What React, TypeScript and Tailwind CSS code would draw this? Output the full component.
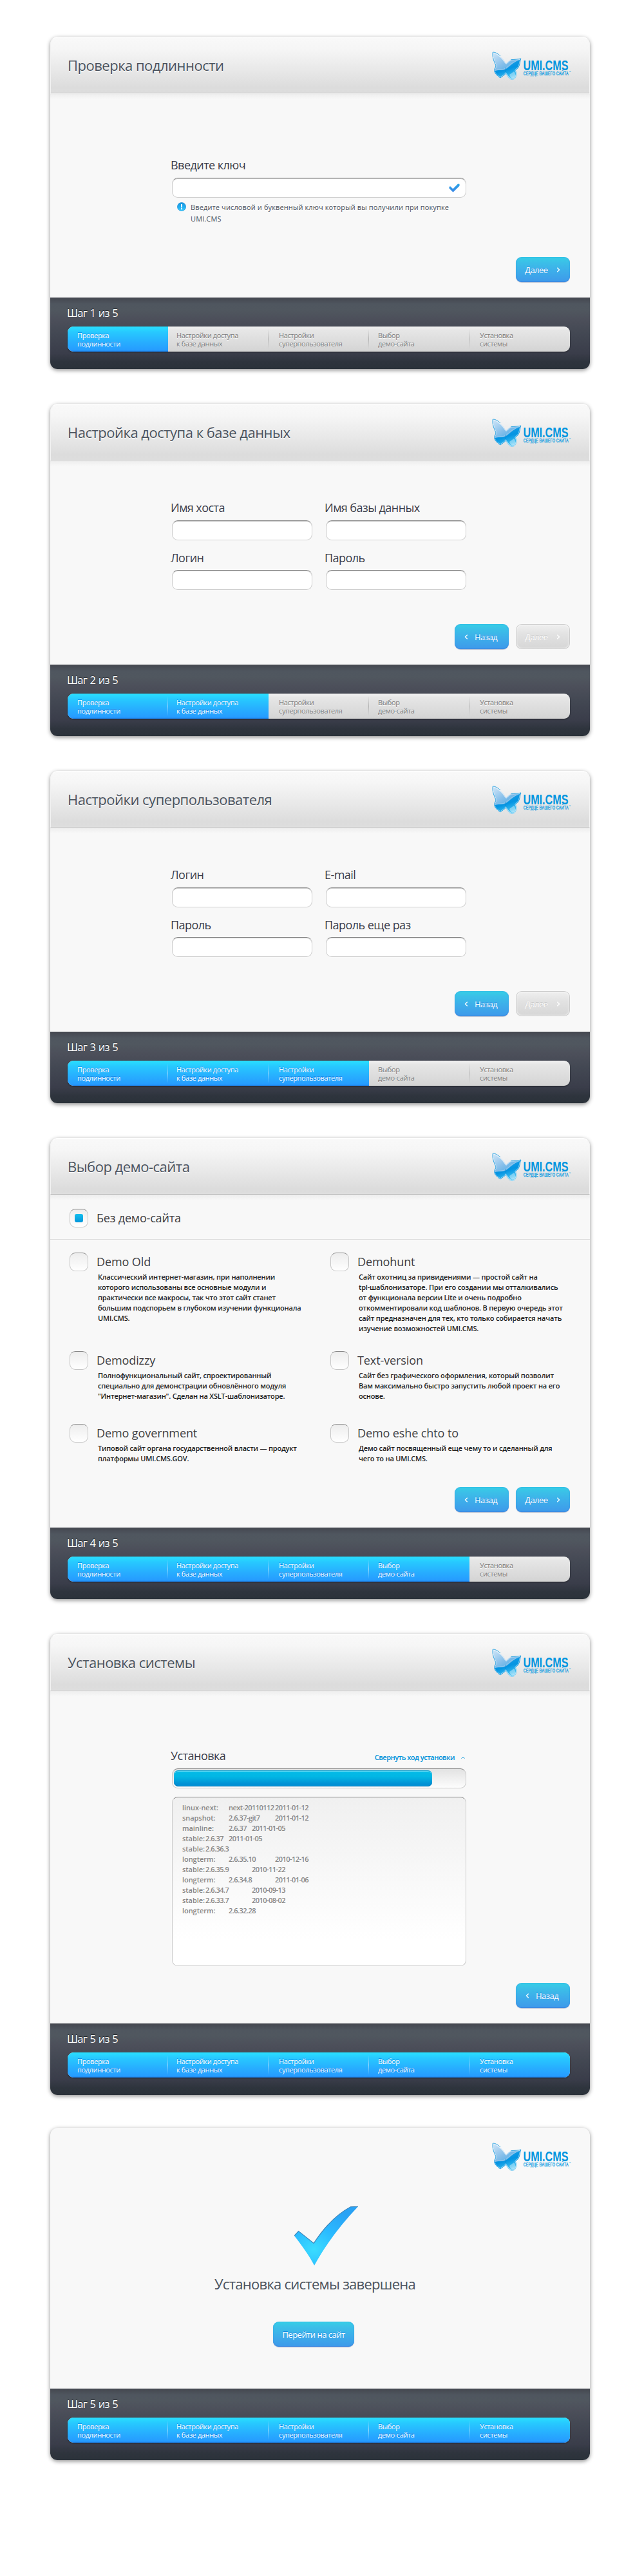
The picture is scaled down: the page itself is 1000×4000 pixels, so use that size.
import type { ReactNode } from 'react';

const STEPS = [
  { lines: ['Проверка', 'подлинности'], pad: 'pl-[15px]' },
  { lines: ['Настройки доступа', 'к базе данных'], pad: 'pl-[13px]' },
  { lines: ['Настройки', 'суперпользователя'], pad: 'pl-[16px]' },
  { lines: ['Выбор', 'демо-сайта'], pad: 'pl-[14px]' },
  { lines: ['Установка', 'системы'], pad: 'pl-[16px]' },
];

const DEMOS = [
  {
    title: 'Demo Old',
    lines: [
      'Классический интернет-магазин, при наполнении',
      'которого использованы все основные модули и',
      'практически все макросы, так что этот сайт станет',
      'большим подспорьем в глубоком изучении функционала',
      'UMI.CMS.',
    ],
  },
  {
    title: 'Demohunt',
    lines: [
      'Сайт охотниц за привидениями — простой сайт на',
      'tpl-шаблонизаторе. При его создании мы отталкивались',
      'от функционала версии Lite и очень подробно',
      'откомментировали код шаблонов. В первую очередь этот',
      'сайт предназначен для тех, кто только собирается начать',
      'изучение возможностей UMI.CMS.',
    ],
  },
  {
    title: 'Demodizzy',
    lines: [
      'Полнофункциональный сайт, спроектированный',
      'специально для демонстрации обновлённого модуля',
      '"Интернет-магазин". Сделан на XSLT-шаблонизаторе.',
    ],
  },
  {
    title: 'Text-version',
    lines: [
      'Сайт без графического оформления, который позволит',
      'Вам максимально быстро запустить любой проект на его',
      'основе.',
    ],
  },
  {
    title: 'Demo government',
    lines: ['Типовой сайт органа государственной власти — продукт', 'платформы UMI.CMS.GOV.'],
  },
  {
    title: 'Demo eshe chto to',
    lines: ['Демо сайт посвященный еще чему то и сделанный для', 'чего то на UMI.CMS.'],
  },
];

// Each cell is [text, number of 36px tab stops it occupies].
const LOG: [string, number][][] = [
  [['linux-next:', 2], ['next-20110112', 2], ['2011-01-12', 2]],
  [['snapshot:', 2], ['2.6.37-git7', 2], ['2011-01-12', 2]],
  [['mainline:', 2], ['2.6.37', 1], ['2011-01-05', 2]],
  [['stable:', 1], ['2.6.37', 1], ['2011-01-05', 2]],
  [['stable:', 1], ['2.6.36.3', 2]],
  [['longterm:', 2], ['2.6.35.10', 2], ['2010-12-16', 2]],
  [['stable:', 1], ['2.6.35.9', 2], ['2010-11-22', 2]],
  [['longterm:', 2], ['2.6.34.8', 2], ['2011-01-06', 2]],
  [['stable:', 1], ['2.6.34.7', 2], ['2010-09-13', 2]],
  [['stable:', 1], ['2.6.33.7', 2], ['2010-08-02', 2]],
  [['longterm:', 2], ['2.6.32.28', 2]],
];

const BUTTERFLY =
  'M2.2 1.2C6 1 15 8 18.5 12.5C20 14.5 22 18 23 18.5C25 17 27 13.5 32 12.5C37 12.2 42 12 46 11C44 15 44.5 21 42 24.5C40.5 27 37.5 28.5 37.5 29.5C39.5 32 39.2 36 38 39C37 42.5 34 44 31 43.5C27.5 42.5 25 38 22.3 34C20.5 37 17 38 14 41C10 38.5 4 34 4.5 29.5C4 26.5 7 25 7 22C4.5 16 1 9 2.2 1.2Z';

function Logo() {
  return (
    <svg className="block h-[46px] w-[126px] shrink-0 overflow-visible" viewBox="0 0 126 46">
      <defs>
        <linearGradient id="wing" x1="0" y1="0" x2="0.7" y2="1">
          <stop offset="0" stopColor="#d3e7f8" />
          <stop offset="0.45" stopColor="#86bfea" />
          <stop offset="1" stopColor="#2f9fe2" />
        </linearGradient>
        <linearGradient id="wingLow" x1="0.2" y1="0" x2="0.6" y2="1">
          <stop offset="0" stopColor="#2aa3e8" />
          <stop offset="0.5" stopColor="#0494e2" />
          <stop offset="0.8" stopColor="#35baf0" />
          <stop offset="1" stopColor="#a8e2f9" />
        </linearGradient>
        <clipPath id="wingClip">
          <path d={BUTTERFLY} />
        </clipPath>
      </defs>
      <path d={BUTTERFLY} fill="url(#wing)" />
      <g clipPath="url(#wingClip)">
        <path d="M4 32C8 26.5 16 31 23 27C30 22 33 17 47 11V46H4Z" fill="url(#wingLow)" />
        <path d="M8 29C14 27.5 18 29 23.5 25C29 20.5 34 16 44 12.5" fill="none" stroke="#fff" strokeOpacity="0.35" strokeWidth="0.9" />
        <path d="M28 36C29 41 33 43 36 40C38 37 37 33 35 31Z" fill="#fff" fillOpacity="0.4" />
        <path d="M22.5 25V35" stroke="#0a86d2" strokeWidth="0.8" />
        <path d={BUTTERFLY} fill="none" stroke="#fff" strokeOpacity="0.6" strokeWidth="2.2" />
      </g>
      <path
        d="M14 6.8C9 2.5 5 .7 2.2 1.2C1 9 4.5 16 7 22C7 25 4 26.5 4.5 29.5C4.5 33 10 38.5 14 41C17 38 20.5 37 22.3 34M30 12.8C37 12.2 42 12 46 11C44 15 44.5 21 42 24.5C40.5 27 37.5 28.5 37.5 29.5"
        fill="none"
        stroke="#189be0"
        strokeWidth="0.9"
      />
      <path d="M37.5 29.5C39.5 32 39.2 36 38 39C37 42.5 34 44 31 43.5C27.5 42.5 25 38 22.3 34" fill="none" stroke="#8bd0f0" strokeWidth="0.8" />
      <text x="49.5" y="28.5" textLength="70" lengthAdjust="spacingAndGlyphs" className="fill-[#0095df] font-['Liberation_Sans',sans-serif] text-[22.5px] font-bold">
        UMI.CMS
      </text>
      <text x="49.8" y="37" textLength="70" lengthAdjust="spacingAndGlyphs" className="fill-[#0095df] font-['Liberation_Sans',sans-serif] text-[8.2px] font-bold">
        СЕРДЦЕ ВАШЕГО САЙТА
      </text>
      <text x="120" y="33" textLength="3.5" lengthAdjust="spacingAndGlyphs" className="fill-[#0095df] font-['Liberation_Sans',sans-serif] text-[4px]">
        ™
      </text>
    </svg>
  );
}

function Footer({ step }: { step: number }) {
  return (
    <footer className="h-[111px] shrink-0 rounded-b-[11px] bg-[linear-gradient(180deg,#44474f_0%,#4f565f_9%,#50575f_17%,#4c4f5a_31%,#434853_50%,#3a3d4a_78%,#2e343d_90%,#2b323a_100%)] pt-[13px]">
      <p className="h-[22px] pl-[26px] text-[16.5px] leading-[22px] tracking-[-0.75px] text-white [word-spacing:1px] [text-shadow:0_-1px_1px_rgba(0,0,0,0.6)]">
        Шаг {step} из 5
      </p>
      <div className="mt-[10px] ml-[27px] flex h-[39px] w-[780px] overflow-hidden rounded-[9px] bg-[linear-gradient(180deg,#f2f2f2,#e6e6e6_15%,#d4d4d4)] shadow-[0_1px_2px_rgba(0,0,0,0.5)]">
        {STEPS.map((s, i) => {
          const on = i < step;
          return (
            <div
              key={i}
              className={
                'flex w-[156px] shrink-0 items-start pt-[7px] text-[11px] leading-[13px] font-medium tracking-[-0.38px] ' +
                s.pad +
                (on
                  ? ' bg-[linear-gradient(180deg,#29e0ff_0%,#27c9ff_22%,#27aeff_62%,#269cff_94%,#1e84f0_100%)] text-white [text-shadow:0_-1px_0_rgba(0,110,220,0.7)]'
                  : ' text-[#7a7a7a] [text-shadow:0_1px_0_rgba(255,255,255,0.8)]')
              }
            >
              <p className="grow whitespace-nowrap">
                {s.lines[0]}
                <br />
                {s.lines[1]}
              </p>
              {i < 4 && i + 1 !== step && (
                <span
                  className={
                    on
                      ? 'mt-[-3px] h-[31px] w-px bg-[linear-gradient(180deg,transparent,#9ad9ff_50%,transparent)]'
                      : 'mt-[-3px] h-[31px] w-px bg-[linear-gradient(180deg,transparent,#b0b0b0_50%,transparent)]'
                  }
                />
              )}
            </div>
          );
        })}
      </div>
    </footer>
  );
}

function Card({ title, step, tall, children }: { title?: string; step: number; tall?: boolean; children: ReactNode }) {
  return (
    <section
      className={
        'mb-[54px] flex w-[838px] flex-col rounded-[12px] bg-[#f8f8f8] shadow-[0_2px_6px_rgba(0,0,0,0.45)] ' + (tall ? 'h-[716px]' : 'h-[516px]')
      }
    >
      {title ? (
        <header className="flex h-[88px] shrink-0 justify-between rounded-t-[12px] border-x border-t border-b border-x-[#f3f3f3] border-t-white border-b-[#b2b2b2] bg-[linear-gradient(180deg,#f9f9f9_0%,#f6f6f6_20%,#e6e6e6_65%,#dcdcdc_90%,#dddddd_100%)] pr-[26px] pl-[26px]">
          <h1 className="text-[22px] leading-[87px] tracking-[-0.5px] whitespace-nowrap text-[#4a525d] [text-shadow:0_1px_0_#fff]">{title}</h1>
          <div className="pt-[22px]">
            <Logo />
          </div>
        </header>
      ) : (
        <header className="flex h-[88px] shrink-0 justify-end pt-[23px] pr-[27px]">
          <Logo />
        </header>
      )}
      <div className={'flex min-h-0 grow flex-col ' + (title ? 'border-t border-white bg-[linear-gradient(180deg,#eeeeee_0px,#f8f8f8_8px)]' : '')}>
        {children}
      </div>
      <Footer step={step} />
    </section>
  );
}

function Label({ children }: { children: ReactNode }) {
  return (
    <p className="ml-[-2px] h-[24px] text-[18px] leading-[24px] tracking-[-0.54px] whitespace-nowrap text-[#3a3c49] [text-shadow:0_1px_0_#fff]">
      {children}
    </p>
  );
}

function Field({ children }: { children?: ReactNode }) {
  return (
    <div className="flex h-[31px] items-center justify-end rounded-[9px] border border-[#cdcdcd] border-t-[#858585] bg-white pr-[9px] shadow-[inset_0_1px_0_#c8c8c8]">
      {children}
    </div>
  );
}

function Chevron({ left }: { left?: boolean }) {
  return (
    <svg className="mt-px h-[8px] w-[6px] shrink-0" viewBox="0 0 6 8" fill="none" stroke="#fff" strokeWidth="1.3">
      <path d={left ? 'M4.7 .8 1.5 4 4.7 7.2' : 'M1.3 .8 4.5 4 1.3 7.2'} />
    </svg>
  );
}

const BUTTON = 'flex h-[39px] items-center rounded-[9px] text-[13px] leading-[20px] font-medium tracking-[-0.5px] whitespace-nowrap text-white ';
const BLUE =
  'bg-[linear-gradient(180deg,#36cfe6_0%,#3bbfe8_22%,#3daeea_55%,#3e99ea_100%)] shadow-[inset_0_-1px_0_#3d86e0,inset_0_0_2px_#2f9be6,0_1px_1px_rgba(60,90,140,0.35)] [text-shadow:0_-1px_0_rgba(0,110,220,0.6)] ';
const GRAY =
  'bg-[linear-gradient(180deg,#f0f0f0,#e2e2e2_40%,#d6d6d6)] shadow-[inset_0_0_0_1px_#cccccc,inset_0_0_3px_1px_#fff] [text-shadow:0_-1px_0_#c4c4c4] ';

function Back() {
  return (
    <button className={BUTTON + BLUE + 'w-[84px] pl-[15px]'}>
      <Chevron left />
      <span className="pl-[10px]">Назад</span>
    </button>
  );
}

function Next({ disabled }: { disabled?: boolean }) {
  return (
    <button className={BUTTON + (disabled ? GRAY : BLUE) + 'w-[84px] justify-between pr-[15px] pl-[14px]'}>
      <span>Далее</span>
      <Chevron />
    </button>
  );
}

function Actions({ children }: { children: ReactNode }) {
  return <div className="mt-auto mb-[24px] flex justify-end gap-[11px] pr-[31px]">{children}</div>;
}

function FieldGrid({ labels }: { labels: string[] }) {
  return (
    <div className="ml-[189px] grid w-[457px] grid-cols-2 gap-x-[21px] pt-[60px]">
      {labels.map((l, i) => (
        <div key={l} className={i < 2 ? 'flex flex-col gap-[8px]' : 'flex flex-col gap-[7px] pt-[15px]'}>
          <Label>{l}</Label>
          <Field />
        </div>
      ))}
    </div>
  );
}

function Radio({ checked }: { checked?: boolean }) {
  return (
    <span className="flex h-[29px] w-[29px] shrink-0 items-center justify-center rounded-[9px] border border-[#c6c6c6] border-t-[#858585] bg-[linear-gradient(180deg,#ededed,#ffffff)]">
      {checked && <span className="h-[13px] w-[13px] rounded-[3px] bg-[linear-gradient(180deg,#13bfee,#0295da)]" />}
    </span>
  );
}

export default function App() {
  return (
    <main className="flex h-[4000px] w-[1000px] flex-col overflow-hidden bg-white pt-[57px] pl-[78px] font-['Open_Sans','Noto_Sans',sans-serif]">
      <Card title="Проверка подлинности" step={1}>
        <div className="ml-[189px] w-[457px] pt-[98px]">
          <Label>Введите ключ</Label>
          <div className="mt-[8px]">
            <Field>
              <svg className="h-[14px] w-[17px]" viewBox="0 0 17 14">
                <defs>
                  <linearGradient id="tick" x1="0" y1="0" x2="0" y2="1">
                    <stop offset="0" stopColor="#2aa6e8" />
                    <stop offset="1" stopColor="#3b86e6" />
                  </linearGradient>
                </defs>
                <path d="M.5 5 2.2 4.2 6.3 8.2 14 .5 16.5.8V3.8L6.5 13.5.5 7.5Z" fill="url(#tick)" />
              </svg>
            </Field>
          </div>
          <div className="mt-[6px] flex pl-[8px]">
            <svg className="mt-px h-[14px] w-[14px] shrink-0" viewBox="0 0 14 14">
              <defs>
                <linearGradient id="info" x1="0" y1="0" x2="0" y2="1">
                  <stop offset="0" stopColor="#1a93dd" />
                  <stop offset="0.6" stopColor="#22b2f4" />
                  <stop offset="1" stopColor="#3fd0ff" />
                </linearGradient>
              </defs>
              <circle cx="7" cy="7" r="6.6" fill="url(#info)" stroke="#1688d2" strokeWidth="0.6" />
              <path d="M6 3H8V8.3H6ZM6 9.3H8V11.2H6Z" fill="#fff" />
            </svg>
            <p className="pl-[7px] text-[11px] leading-[18px] font-medium tracking-[0.12px] whitespace-nowrap text-[#4d535e]">
              Введите числовой и буквенный ключ который вы получили при покупке
              <br />
              UMI.CMS
            </p>
          </div>
        </div>
        <Actions>
          <Next />
        </Actions>
      </Card>

      <Card title="Настройка доступа к базе данных" step={2}>
        <FieldGrid labels={['Имя хоста', 'Имя базы данных', 'Логин', 'Пароль']} />
        <Actions>
          <Back />
          <Next disabled />
        </Actions>
      </Card>

      <Card title="Настройки суперпользователя" step={3}>
        <FieldGrid labels={['Логин', 'E-mail', 'Пароль', 'Пароль еще раз']} />
        <Actions>
          <Back />
          <Next disabled />
        </Actions>
      </Card>

      <Card title="Выбор демо-сайта" step={4} tall>
        <div className="flex h-[69px] shrink-0 border-b border-[#dcdcdc] pt-[21px] pl-[30px]">
          <Radio checked />
          <p className="pl-[13px] text-[18px] leading-[28px] tracking-[-0.18px] text-[#3e3e42]">Без демо-сайта</p>
        </div>
        <div className="grid grid-cols-[405px_1fr] grid-rows-[153px_113px_auto] border-t border-white pt-[19px] pl-[30px]">
          {DEMOS.map((d) => (
            <div key={d.title} className="flex">
              <Radio />
              <div className="pl-[13px]">
                <h2 className="text-[18px] leading-[28px] tracking-[-0.1px] text-[#3e3e42]">{d.title}</h2>
                <p className="pt-[2px] pl-[2px] text-[11px] leading-[16px] font-semibold tracking-[-0.19px] whitespace-pre text-[#1c1c1c]">
                  {d.lines.join('\n')}
                </p>
              </div>
            </div>
          ))}
        </div>
        <Actions>
          <Back />
          <Next />
        </Actions>
      </Card>

      <Card title="Установка системы" step={5} tall>
        <div className="ml-[189px] w-[457px] pt-[88px]">
          <div className="flex items-baseline justify-between">
            <Label>Установка</Label>
            <p className="flex items-center gap-[10px] pr-[2px] text-[11px] font-semibold tracking-[-0.48px] text-[#0092da]">
              Свернуть ход установки
              <svg className="h-[4px] w-[6px]" viewBox="0 0 6 4" fill="none" stroke="#0092da">
                <path d="M.5 3.5 3 1 5.5 3.5" />
              </svg>
            </p>
          </div>
          <div className="mt-[8px] h-[31px] rounded-[9px] border border-[#c8c8c8] border-t-[#808080] bg-[linear-gradient(180deg,#e2e2e2,#fdfdfd)] px-[2px] py-[2px]">
            <div className="h-[25px] w-[401px] rounded-[7px] bg-[linear-gradient(180deg,#04bce8_0%,#02b6e4_40%,#0190d4_85%,#0190d4_100%)] shadow-[inset_0_1px_0_#0a9ccb,inset_0_2px_0_#5fd6f2,inset_0_-1px_0_#0779b8]" />
          </div>
          <div className="mt-[13px] h-[263px] rounded-[9px] border border-[#cbcbcb] border-t-[#808080] bg-[linear-gradient(180deg,#f0f0f0,#ffffff_85%)] px-[15px] pt-[8px]">
            {LOG.map((row, i) => (
              <div key={i} className="flex h-[16px] text-[11px] leading-[16px] font-semibold whitespace-nowrap text-[#868686]">
                {row.map(([text, tabs], j) => (
                  <span key={j} className={(j === 0 ? 'tracking-[-0.05px] ' : 'tracking-[-0.54px] ') + (tabs === 2 ? 'w-[72px]' : 'w-[36px]')}>
                    {text}
                  </span>
                ))}
              </div>
            ))}
          </div>
        </div>
        <Actions>
          <Back />
        </Actions>
      </Card>

      <div className="mt-[-3px]">
        <Card step={5}>
          <div className="flex w-[822px] flex-col items-center pt-[34px]">
            <svg className="ml-[34px] h-[92px] w-[99px]" viewBox="384 396 242 268" preserveAspectRatio="none">
              <defs>
                <radialGradient id="done" gradientUnits="userSpaceOnUse" cx="458" cy="590" r="200">
                  <stop offset="0" stopColor="#3bdcff" />
                  <stop offset="0.5" stopColor="#2ab9ff" />
                  <stop offset="1" stopColor="#2aa2f4" />
                </radialGradient>
              </defs>
              <path d="M384 529 400 508 458 563C495 495 545 432 598 398L626 397C562 478 505 565 460 663C440 618 412 572 384 529Z" fill="url(#done)" />
              <path d="M384 529 400 508 458 563C495 495 545 432 598 398L626 397" fill="none" stroke="#3b83b8" strokeWidth="3" />
            </svg>
            <p className="mt-[13px] text-[22px] leading-[30px] tracking-[-0.73px] whitespace-nowrap text-[#4a525d]">Установка системы завершена</p>
            <button className={BUTTON + BLUE + 'mt-[44px] ml-[-4px] w-[126px] justify-center'}>Перейти на сайт</button>
          </div>
        </Card>
      </div>
    </main>
  );
}
